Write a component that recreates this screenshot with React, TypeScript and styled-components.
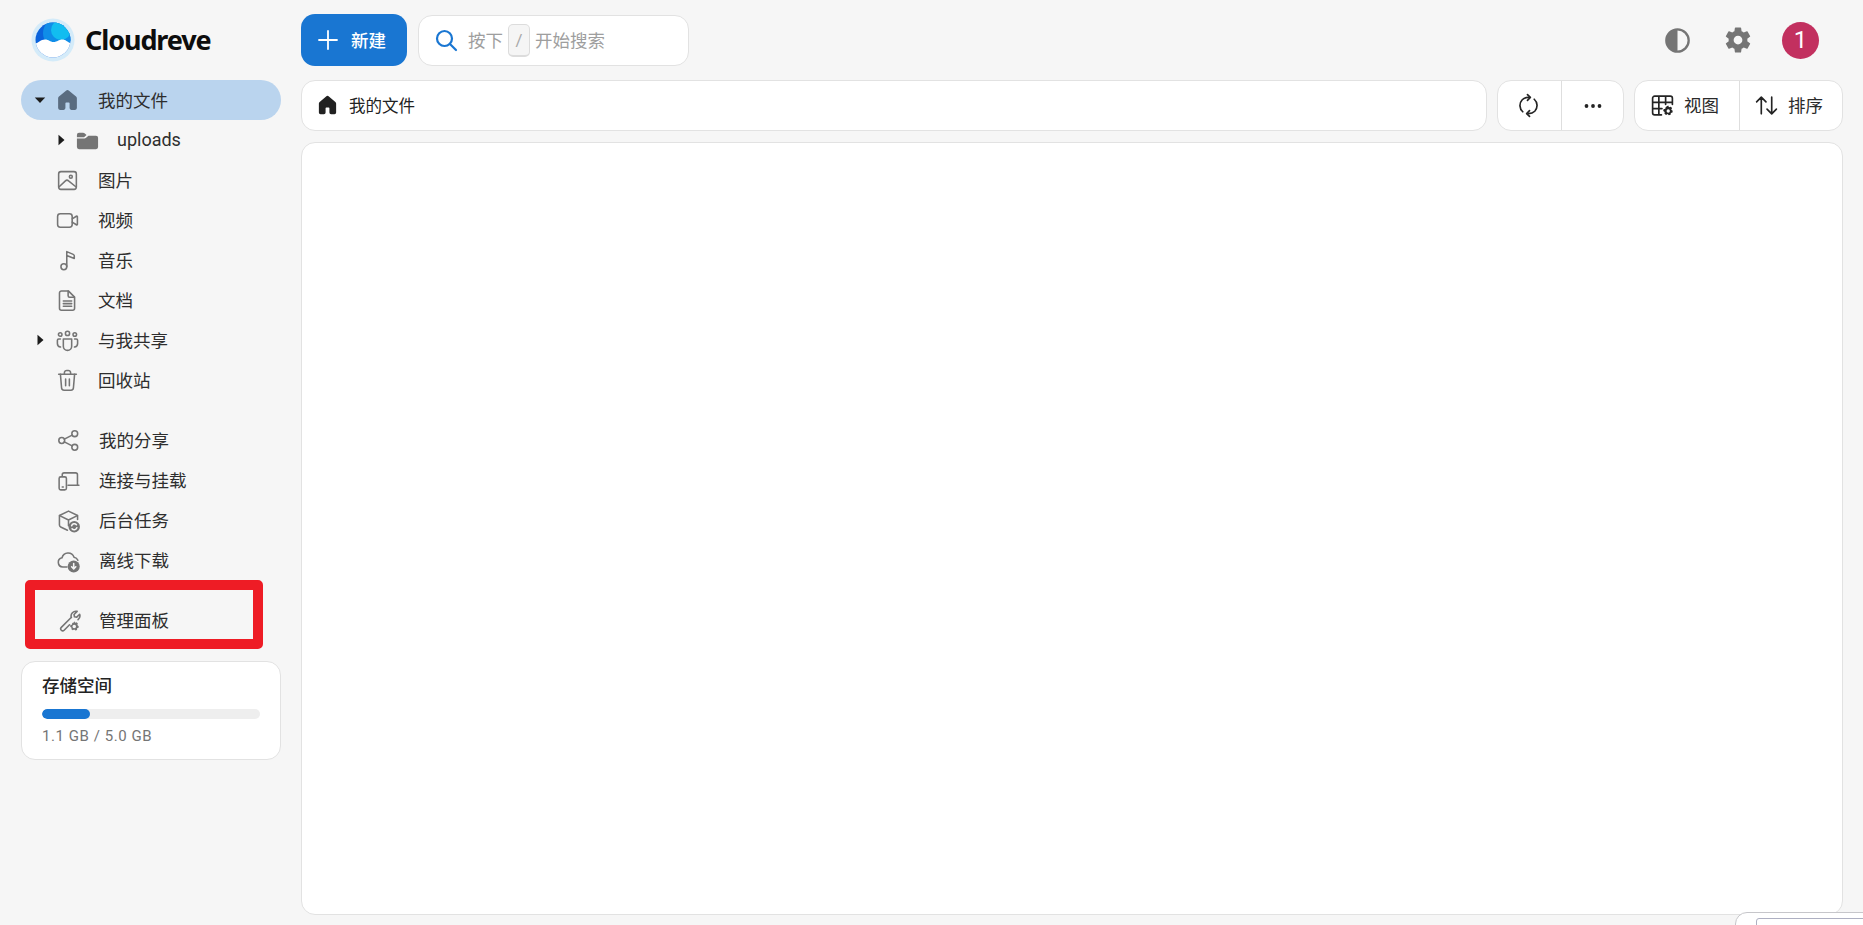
import React from "react";
import styled, { createGlobalStyle } from "styled-components";

const Global = createGlobalStyle`
  html, body { margin: 0; padding: 0; background: #f6f6f6; }
  body { font-family: Roboto, "Noto Sans CJK SC", sans-serif; color: #2b2b2b; }
  * { box-sizing: border-box; }
`;

const Page = styled.div`
  position: relative;
  width: 1863px;
  height: 925px;
  overflow: hidden;
  display: grid;
  grid-template-columns: 301px 1fr;
  background: #f6f6f6;
`;

const Sidebar = styled.aside`
  display: flex;
  flex-direction: column;
  padding-left: 21px;
  width: 281px;
  box-sizing: content-box;
`;

const Brand = styled.div`
  height: 80px;
  display: flex;
  align-items: center;
  gap: 10px;
  padding: 0 0 0 10px;
`;

const BrandName = styled.span`
  font-family: "Noto Sans", sans-serif;
  font-weight: 700;
  font-size: 27px;
  letter-spacing: -1.1px;
  margin-bottom: 2px;
  color: #0d0d0d;
`;

const NavGroup = styled.nav`
  display: flex;
  flex-direction: column;
  width: 260px;
  margin-bottom: 20px;
`;

const NavRow = styled.div<{ $active?: boolean; $indent?: number; $shift?: number; $gap?: number }>`
  position: relative;
  height: 40px;
  display: flex;
  align-items: center;
  padding-left: ${(p) => 34 + (p.$shift ?? 0) + (p.$indent ?? 0)}px;
  gap: ${(p) => p.$gap ?? 18}px;
  border-radius: 20px;
  font-size: 17.5px;
  color: #2e2e2e;
  background: ${(p) => (p.$active ? "#bad4ee" : "transparent")};
`;

const Label = styled.span`
  margin-bottom: 2px;
  white-space: nowrap;
`;

const FolderLabel = styled.span`
  font-size: 18px;
  margin-bottom: 1px;
`;

const Caret = styled.svg<{ $indent?: number }>`
  position: absolute;
  left: ${(p) => 13 + (p.$indent ?? 0)}px;
  top: 14px;
  width: 12px;
  height: 12px;
  fill: #1c1c1c;
`;

const NavIcon = styled.svg<{ $active?: boolean }>`
  width: 25px;
  height: 25px;
  flex: none;
  fill: none;
  stroke: ${(p) => (p.$active ? "#5a6c80" : "#757575")};
  stroke-width: 1.5;
  stroke-linecap: round;
  stroke-linejoin: round;
`;

const FillPath = styled.path<{ $color?: string }>`
  fill: ${(p) => p.$color ?? "#757575"};
  stroke: none;
`;

const Highlight = styled.div`
  position: absolute;
  left: 4px;
  top: -20px;
  width: 238px;
  height: 69px;
  border: 10px solid #ee1c25;
  border-radius: 5px;
  pointer-events: none;
`;

const StorageCard = styled.section`
  width: 260px;
  height: 99px;
  margin-top: 1px;
  padding: 12px 20px 0 20px;
  background: #fff;
  border: 1px solid #e2e2e2;
  border-radius: 14px;
`;

const StorageTitle = styled.div`
  font-size: 17.5px;
  line-height: 24px;
  font-weight: 500;
  color: #222;
`;

const Track = styled.div`
  height: 10px;
  margin-top: 11px;
  border-radius: 5px;
  background: #eeeeee;
  overflow: hidden;
`;

const Fill = styled.div`
  height: 100%;
  border-radius: 5px;
  background: #1976d2;
`;

const StorageText = styled.div`
  margin-top: 7px;
  font-size: 15px;
  line-height: 20px;
  letter-spacing: 0.55px;
  color: #757575;
`;

const Main = styled.main`
  display: flex;
  flex-direction: column;
  padding: 14px 20px 10px 0;
  min-width: 0;
`;

const Header = styled.header`
  height: 52px;
  display: flex;
  align-items: center;
  gap: 11px;
`;

const NewButton = styled.button`
  width: 106px;
  height: 52px;
  display: flex;
  align-items: center;
  gap: 12px;
  padding: 0 0 0 16px;
  border: 0;
  border-radius: 14px;
  background: #1976d2;
  color: #fff;
  font: 500 17.5px Roboto, "Noto Sans CJK SC", sans-serif;
`;

const Search = styled.div`
  width: 271px;
  height: 51px;
  display: flex;
  align-items: center;
  padding-left: 15px;
  background: #fff;
  border: 1px solid #e2e2e2;
  border-radius: 14px;
  font-size: 17.5px;
  color: #9e9e9e;
`;

const SearchLabel = styled.span`
  margin: 0 0 2px 10px;
  white-space: nowrap;
`;

const Key = styled.span`
  width: 22px;
  height: 33px;
  margin: 0 5px 0 5px;
  display: flex;
  align-items: center;
  justify-content: center;
  background: #f5f5f5;
  border: 1px solid #dcdcdc;
  border-bottom-width: 2px;
  border-radius: 5px;
  font-size: 17px;
  color: #a8a8a8;
`;

const HeaderActions = styled.div`
  margin-left: auto;
  display: flex;
  align-items: center;
  padding-right: 24px;
  gap: 27px;
`;

const HeaderIcon = styled.svg<{ $size: number }>`
  width: ${(p) => p.$size}px;
  height: ${(p) => p.$size}px;
  fill: #757575;
`;

const Avatar = styled.div`
  width: 37px;
  height: 37px;
  margin-left: 2px;
  border-radius: 50%;
  background: #c2305f;
  color: #fff;
  display: flex;
  align-items: center;
  justify-content: center;
  font-size: 24px;
  font-weight: 400;
`;

const Toolbar = styled.div`
  height: 51px;
  margin-top: 14px;
  display: flex;
  gap: 10px;
`;

const Crumbs = styled.div`
  flex: 1;
  display: flex;
  align-items: center;
  gap: 10px;
  padding-left: 14px;
  background: #fff;
  border: 1px solid #e2e2e2;
  border-radius: 14px;
  font-size: 16.5px;
  color: #222;
`;

const ToolGroup = styled.div`
  display: flex;
  background: #fff;
  border: 1px solid #e2e2e2;
  border-radius: 14px;
  overflow: hidden;
`;

const ToolButton = styled.div<{ $width: number; $nudge?: number }>`
  width: ${(p) => p.$width}px;
  display: flex;
  align-items: center;
  justify-content: center;
  gap: 9px;
  padding-right: ${(p) => p.$nudge ?? 0}px;
  font-size: 17.5px;
  color: #2a2a2a;
  & + & { border-left: 1px solid #dedede; }
`;

const ToolIcon = styled.svg`
  width: 25px;
  height: 25px;
  fill: none;
  stroke: #242424;
  stroke-width: 1.6;
  stroke-linecap: round;
  stroke-linejoin: round;
  flex: none;
`;

const ContentPanel = styled.section`
  flex: 1;
  margin-top: 11px;
  background: #fff;
  border: 1px solid #e2e2e2;
  border-radius: 14px;
`;

const CornerPopup = styled.div`
  position: absolute;
  left: 1735px;
  top: 912px;
  width: 160px;
  height: 40px;
  padding: 5px 0 0 20px;
  background: #fff;
  border: 1px solid #c6c6ca;
  border-radius: 12px 0 0 0;
`;

const CornerInner = styled.div`
  height: 30px;
  border: 1px solid #aeb0c2;
  border-radius: 3px 0 0 0;
  background: #fff;
`;

const icons: Record<string, React.ReactNode> = {
  image: (
    <>
      <rect x="3.5" y="3.5" width="17" height="17" rx="2.2" />
      <circle cx="15.2" cy="8.4" r="1.4" />
      <path d="M4 18l6-5.6a2.2 2.2 0 013 0l7 5.6" />
    </>
  ),
  video: (
    <>
      <rect x="2.5" y="5.5" width="14" height="13" rx="2.6" />
      <path d="M16.5 10.5l4-2.6c.5-.3 1 0 1 .6v7c0 .6-.5.9-1 .6l-4-2.6" />
    </>
  ),
  music: (
    <>
      <circle cx="8.5" cy="18" r="2.8" />
      <path d="M11.3 18V3.5l6.2 2.6c.7.3 1 .8 1 1.5V10l-7.2-2.8" />
    </>
  ),
  doc: (
    <>
      <path d="M6.2 2.8h6.6l6 6v10.6a1.9 1.9 0 01-1.9 1.9H6.2a1.9 1.9 0 01-1.9-1.9V4.7a1.9 1.9 0 011.9-1.9z" />
      <path d="M12.6 3v4.400a1.500 1.500 0 001.500 1.500h4.500M8 12.500h8M8 15h8M8 17.500h8" />
    </>
  ),
  people: (
    <>
      <circle cx="12" cy="5.200" r="2" />
      <circle cx="5" cy="6.200" r="1.700" />
      <circle cx="19" cy="6.200" r="1.700" />
      <path d="M8 10.500h8v7a4 4 0 01-8 0z" />
      <path d="M5.200 10.500H3.600c-.8 0-1.300.5-1.300 1.300v3a3.600 3.600 0 003 3.500M18.800 10.500h1.600c.8 0 1.300.5 1.300 1.300v3a3.600 3.600 0 01-3 3.500" />
    </>
  ),
  trash: (
    <>
      <path d="M3.500 6h17M9 6V4.800A2.300 2.300 0 0112 2.500a2.300 2.300 0 013 2.300V6" />
      <path d="M5.200 6l1.100 13a2.400 2.400 0 002.400 2.300h6.600a2.400 2.400 0 002.400-2.300L18.800 6M10.200 10.500v6.500M13.800 10.500v6.500" />
    </>
  ),
  share: (
    <>
      <circle cx="18" cy="5.500" r="2.800" />
      <circle cx="18" cy="18.500" r="2.800" />
      <circle cx="5.500" cy="12" r="2.800" />
      <path d="M8 10.700l7.500-3.900M8 13.300l7.500 3.900" />
    </>
  ),
  devices: (
    <>
      <path d="M6 7.500V6.500A1.800 1.800 0 017.800 4.700h11A1.800 1.800 0 0120.600 6.500v9.800" />
      <rect x="3" y="8.500" width="7" height="12.500" rx="1.600" />
      <path d="M11.500 16.500h10.500M6 18.200h1" />
    </>
  ),
  task: (
    <>
      <path d="M11 21.300l-6.500-3.100a2 2 0 01-1.200-1.800V7.200L12 3l8.700 4.200V11" />
      <path d="M3.500 7.300L12 11.500l8.500-4.200M12 11.500V17" />
      <FillPath d="M17.500 12.500a5.500 5.500 0 100 11 5.500 5.500 0 000-11z" />
      <path d="M15 17a2.700 2.700 0 014.600-1M20 19a2.700 2.700 0 01-4.600 1" stroke="#f6f6f6" />
    </>
  ),
  cloud: (
    <>
      <path d="M10.500 18.200H6.500a4.500 4.500 0 01-.7-8.900 6 6 0 0111.500-.5 4.800 4.800 0 013.700 3" />
      <FillPath d="M17 12a5.800 5.800 0 100 11.600A5.800 5.800 0 0017 12z" />
      <path d="M17 14.800v5.200M15 18l2 2 2-2" stroke="#f6f6f6" />
    </>
  ),
  admin: (
    <>
      <path d="M14.800 8.900l-9.700 9.700a1.900 1.900 0 002.700 2.700l5.200-5.200M14.700 9.200a4.700 4.700 0 015.600-6l-3 3 .4 2.200 2.200.4 2.800-2.800a4.700 4.700 0 01-1.500 5.200" />
      <FillPath d="M17.800 12.600l.5 1.500 1.500-.4 1.200 1.200-.5 1.500 1.300 1-.1 1.500-1.400.6-.1 1.600-1.500.6-1.200-1-1.400.7-1.300-.9.1-1.600-1.300-.9.2-1.600 1.500-.4.3-1.500 1.400-.5zM17.500 16a1.700 1.700 0 100 3.400 1.700 1.700 0 000-3.400z" />
    </>
  ),
};

const HOME =
  "M10.550 2.530a2.250 2.250 0 012.900 0l6.750 5.700c.5.420.8 1.050.8 1.720v9.300A1.750 1.750 0 0119.250 21h-3.500A1.750 1.750 0 0114 19.250v-4.500a.75.75 0 00-.75-.75h-2.500a.75.75 0 00-.75.75v4.500A1.750 1.750 0 018.250 21h-3.500A1.750 1.750 0 013 19.250v-9.300c0-.67.3-1.300.8-1.720z";

type Item = { label: string; icon: string; caret?: "open" | "closed" };

const primary: Item[] = [
  { label: "图片", icon: "image" },
  { label: "视频", icon: "video" },
  { label: "音乐", icon: "music" },
  { label: "文档", icon: "doc" },
  { label: "与我共享", icon: "people", caret: "closed" },
  { label: "回收站", icon: "trash" },
];

const secondary: Item[] = [
  { label: "我的分享", icon: "share" },
  { label: "连接与挂载", icon: "devices" },
  { label: "后台任务", icon: "task" },
  { label: "离线下载", icon: "cloud" },
];

const CaretRight = ({ indent }: { indent?: number }) => (
  <Caret viewBox="0 0 12 12" $indent={indent}>
    <path d="M3.500 0.800L9.500 6l-6 5.200z" />
  </Caret>
);

const CaretDown = () => (
  <Caret viewBox="0 0 12 12">
    <path d="M0.800 3.500h10.400L6 9z" />
  </Caret>
);

const Row = ({ item, shift }: { item: Item; shift?: number }) => (
  <NavRow $shift={shift}>
    {item.caret === "closed" && <CaretRight />}
    <NavIcon viewBox="0 0 24 24">{icons[item.icon]}</NavIcon>
    <Label>{item.label}</Label>
  </NavRow>
);

const Logo = () => (
  <svg width="44" height="44" viewBox="0 0 44 44">
    <defs>
      <clipPath id="logo-clip">
        <circle cx="22" cy="22" r="17.500" />
      </clipPath>
    </defs>
    <circle cx="22" cy="22" r="21.500" fill="#d4ebf9" />
    <circle cx="22" cy="22" r="17.500" fill="#0a63dc" />
    <g clipPath="url(#logo-clip)">
      <circle cx="27" cy="15" r="15" fill="#0f8de8" />
      <circle cx="30" cy="12" r="10" fill="#12bdf0" />
      <path d="M2 44V26c5 0 7-4.500 12-4.500 4 0 5 2.500 8.500 2.500 4 0 5-2.500 9-2.500 3.500 0 5 3 10 4.500v18z" fill="#ffffff" />
    </g>
  </svg>
);

export default function App() {
  return (
    <Page>
      <Global />
      <Sidebar>
        <Brand>
          <Logo />
          <BrandName>Cloudreve</BrandName>
        </Brand>
        <NavGroup>
          <NavRow $active>
            <CaretDown />
            <NavIcon viewBox="0 0 24 24" $active>
              <FillPath d={HOME} $color="#5a6c80" />
            </NavIcon>
            <Label>我的文件</Label>
          </NavRow>
          <NavRow $indent={20} $gap={17}>
            <CaretRight indent={21} />
            <NavIcon viewBox="0 -1 26 26">
              <FillPath d="M2 6.200A2.200 2.200 0 014.200 4h4.300c.5 0 1 .2 1.400.5L12 6.200 9.400 8.500H2zM2 10h7.900c.5 0 .9-.2 1.300-.5L14 7h7.800A2.200 2.200 0 0124 9.200v9.600a2.200 2.200 0 01-2.200 2.200H4.200A2.200 2.200 0 012 18.800z" />
            </NavIcon>
            <FolderLabel>uploads</FolderLabel>
          </NavRow>
          {primary.map((item) => (
            <Row key={item.label} item={item} />
          ))}
        </NavGroup>
        <NavGroup>
          {secondary.map((item) => (
            <Row key={item.label} item={item} shift={1} />
          ))}
        </NavGroup>
        <NavGroup>
          <NavRow $shift={1}>
            <NavIcon viewBox="0 0 24 24">{icons.admin}</NavIcon>
            <Label>管理面板</Label>
            <Highlight />
          </NavRow>
        </NavGroup>
        <StorageCard>
          <StorageTitle>存储空间</StorageTitle>
          <Track>
            <Fill style={{ width: `${(1.1 / 5) * 100}%` }} />
          </Track>
          <StorageText>1.1 GB / 5.0 GB</StorageText>
        </StorageCard>
      </Sidebar>
      <Main>
        <Header>
          <NewButton>
            <svg width="22" height="22" viewBox="0 0 22 22" fill="none" stroke="#fff" strokeWidth="1.800" strokeLinecap="round">
              <path d="M11 2v18M2 11h18" />
            </svg>
            <Label>新建</Label>
          </NewButton>
          <Search>
            <svg width="24" height="24" viewBox="0 0 24 24" fill="none" stroke="#1976d2" strokeWidth="2.200" strokeLinecap="round">
              <circle cx="10.500" cy="10.500" r="7.500" />
              <path d="M16 16l6 6" />
            </svg>
            <SearchLabel>按下</SearchLabel>
            <Key>/</Key>
            <Label>开始搜索</Label>
          </Search>
          <HeaderActions>
            <HeaderIcon viewBox="0 0 24 24" $size={37}>
              <path d="M12 4a8 8 0 110 16 8 8 0 010-16zm0 1.500v13a6.500 6.500 0 000-13z" />
            </HeaderIcon>
            <HeaderIcon viewBox="0 0 24 24" $size={30}>
              <path d="M19.430 12.980c.04-.32.07-.64.07-.98s-.03-.66-.07-.98l2.110-1.650a.5.5 0 00.12-.64l-2-3.460a.5.5 0 00-.61-.22l-2.490 1a7.300 7.300 0 00-1.690-.98l-.38-2.650A.49.49 0 0014 2h-4a.49.49 0 00-.49.420l-.38 2.650c-.61.250-1.170.590-1.690.980l-2.490-1a.5.5 0 00-.61.220l-2 3.460a.49.49 0 00.12.640l2.110 1.650c-.04.320-.07.650-.07.980s.03.660.07.980l-2.110 1.650a.5.5 0 00-.12.640l2 3.460c.12.220.39.300.61.220l2.490-1c.52.400 1.080.730 1.690.980l.38 2.650c.03.240.24.420.49.420h4c.25 0 .46-.18.49-.420l.38-2.650c.61-.250 1.170-.590 1.690-.980l2.490 1c.23.080.49 0 .61-.220l2-3.460a.5.5 0 00-.12-.640zM12 15.500a3.500 3.500 0 110-7 3.500 3.500 0 010 7z" />
            </HeaderIcon>
            <Avatar>1</Avatar>
          </HeaderActions>
        </Header>
        <Toolbar>
          <Crumbs>
            <svg width="23" height="23" viewBox="0 0 24 24" fill="#212121">
              <path d={HOME} />
            </svg>
            <Label>我的文件</Label>
          </Crumbs>
          <ToolGroup>
            <ToolButton $width={63} $nudge={2}>
              <ToolIcon viewBox="0 0 24 24">
                <path d="M6.500 18a8 8 0 01-.5-11.500C7.500 5 9.500 4.200 12 4.200M17.500 6a8 8 0 01.5 11.500c-1.500 1.500-3.500 2.300-6 2.300" />
                <path d="M11 1.500l2.800 2.700L11 7M13 17l-2.800 2.800 2.800 2.700" />
              </ToolIcon>
            </ToolButton>
            <ToolButton $width={62}>
              <svg width="20" height="6" viewBox="0 0 20 6" fill="#242424">
                <circle cx="3.500" cy="3" r="1.900" />
                <circle cx="10" cy="3" r="1.900" />
                <circle cx="16.500" cy="3" r="1.900" />
              </svg>
            </ToolButton>
          </ToolGroup>
          <ToolGroup>
            <ToolButton $width={104} $nudge={5}>
              <ToolIcon viewBox="0 0 24 24">
                <path d="M11 21H4.500A2 2 0 012.500 19V5A2 2 0 014.500 3h15a2 2 0 012 2v6M2.500 9h19M2.500 15h9M8.500 3v18M15 3v8" />
                <FillPath d="M17.500 12l.7 1.600 1.700-.5 1.300 1.400-.8 1.500 1.400 1-.2 1.700-1.600.5-.2 1.700-1.700.5-1.200-1.200-1.500.8-1.500-1 .2-1.700-1.400-1 .3-1.700 1.700-.4.400-1.700zM17.500 15.700a1.600 1.600 0 100 3.200 1.600 1.600 0 000-3.200z" $color="#242424" />
              </ToolIcon>
              <Label>视图</Label>
            </ToolButton>
            <ToolButton $width={103} $nudge={5}>
              <ToolIcon viewBox="0 0 24 24">
                <path d="M7 20V4M2.500 8.500L7 4l4.500 4.500M17 4v16M12.500 15.500L17 20l4.500-4.500" />
              </ToolIcon>
              <Label>排序</Label>
            </ToolButton>
          </ToolGroup>
        </Toolbar>
        <ContentPanel />
      </Main>
      <CornerPopup>
        <CornerInner />
      </CornerPopup>
    </Page>
  );
}
